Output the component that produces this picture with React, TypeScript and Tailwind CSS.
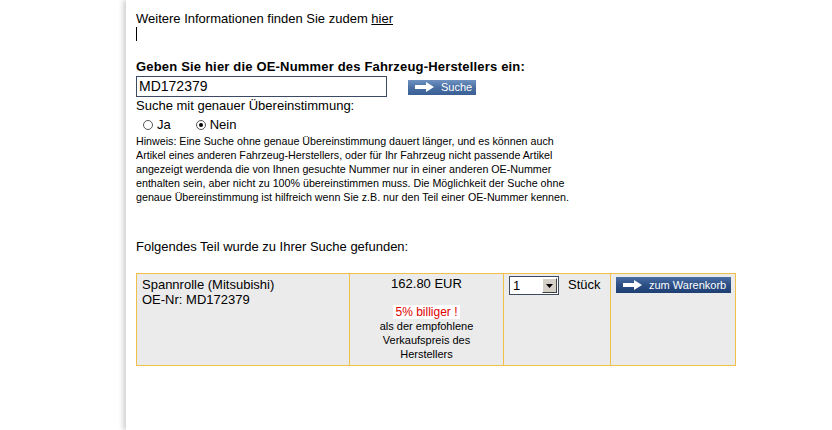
import React from "react";

function Arrow() {
  return (
    <svg width="20" height="10" viewBox="0 0 20 10" className="shrink-0">
      <path d="M0 3 H11 V0 L19 5 L11 10 V7 H0 Z" fill="#ffffff" />
    </svg>
  );
}

export default function App() {
  return (
    <div
      className="w-[832px] h-[430px] bg-white overflow-hidden flex"
      style={{ fontFamily: '"Liberation Sans", Arial, sans-serif' }}
    >
      <div className="w-[126px] shrink-0 bg-white" />
      <div className="flex-1 bg-white shadow-[-3px_0_5px_rgba(0,0,0,0.18)] pl-[10px] pt-[11px] text-black">
        <div className="text-[13px] leading-[15px]">
          Weitere Informationen finden Sie zudem <span className="underline">hier</span>
        </div>
        <div className="w-px h-[14px] bg-black mt-[1px]" />
        <div className="mt-[18px] text-[13px] leading-[15px] font-bold tracking-[0.18px]">
          Geben Sie hier die OE-Nummer des Fahrzeug-Herstellers ein:
        </div>
        <div className="flex items-center mt-[2px]">
          <div className="w-[251px] h-[21px] border border-[#3c4b63] px-[2px] flex items-center text-[14px]">
            MD172379
          </div>
          <div className="ml-[21px] mt-[1px] w-[68px] h-[15px] bg-gradient-to-b from-[#6f92c0] via-[#4a70a4] to-[#3a5f94] flex items-center pl-[7px] gap-[6px] text-white text-[11px]">
            <Arrow />
            <span>Suche</span>
          </div>
        </div>
        <div className="mt-[1px] text-[13px] leading-[16px]">Suche mit genauer Übereinstimmung:</div>
        <div className="flex items-center text-[13px] leading-[16px] mt-[3px] pl-[7px]">
          <span className="w-[10px] h-[10px] rounded-full border border-[#555] bg-white inline-block" />
          <span className="ml-[4px]">Ja</span>
          <span className="ml-[25px] w-[10px] h-[10px] rounded-full border border-[#555] bg-white inline-flex items-center justify-center">
            <span className="w-[4px] h-[4px] rounded-full bg-black" />
          </span>
          <span className="ml-[4px]">Nein</span>
        </div>
        <div className="mt-[1px] text-[10.7px] leading-[14px] whitespace-nowrap">
          Hinweis: Eine Suche ohne genaue Übereinstimmung dauert länger, und es können auch
          <br />
          Artikel eines anderen Fahrzeug-Herstellers, oder für Ihr Fahrzeug nicht passende Artikel
          <br />
          angezeigt werdenda die von Ihnen gesuchte Nummer nur in einer anderen OE-Nummer
          <br />
          enthalten sein, aber nicht zu 100% übereinstimmen muss. Die Möglichkeit der Suche ohne
          <br />
          genaue Übereinstimmung ist hilfreich wenn Sie z.B. nur den Teil einer OE-Nummer kennen.
        </div>
        <div className="mt-[35px] text-[13px] leading-[15px]">Folgendes Teil wurde zu Ihrer Suche gefunden:</div>
        <div className="mt-[19px] w-[600px] h-[93px] bg-[#f0c04a] p-px gap-px flex text-[13px]">
          <div className="w-[212px] bg-[#ebebeb] px-[5px] pt-[3px] leading-[15px]">
            <div>Spannrolle (Mitsubishi)</div>
            <div>OE-Nr: MD172379</div>
          </div>
          <div className="w-[153px] bg-[#ebebeb] pt-[2px] flex flex-col items-center text-center">
            <div className="leading-[15px]">162.80 EUR</div>
            <div className="mt-[14px] bg-white text-[#e00000] text-[12px] leading-[14px] px-[2px]">5% billiger !</div>
            <div className="text-[11px] leading-[14px]">
              als der empfohlene
              <br />
              Verkaufspreis des
              <br />
              Herstellers
            </div>
          </div>
          <div className="w-[106px] bg-[#ebebeb] pl-[5px] pt-[2px] flex items-start">
            <div className="w-[50px] h-[19px] border border-[#3c4b63] bg-white flex items-center">
              <span className="flex-1 pl-[3px] text-[13px]">1</span>
              <span className="w-[15px] h-[15px] mr-[1px] bg-[#d4d0c8] border border-t-white border-l-white border-r-[#404040] border-b-[#404040] flex items-center justify-center">
                <svg width="7" height="4" viewBox="0 0 7 4"><path d="M0 0 H7 L3.5 4 Z" fill="#000" /></svg>
              </span>
            </div>
            <span className="ml-[9px] mt-[1px] leading-[16px]">Stück</span>
          </div>
          <div className="flex-1 bg-[#ebebeb] pl-[5px] pt-[3px]">
            <div className="w-[115px] h-[16px] bg-gradient-to-b from-[#4a6fa3] via-[#2c4f86] to-[#1f3f72] flex items-center pl-[7px] gap-[6px] text-white text-[11px]">
              <Arrow />
              <span>zum Warenkorb</span>
            </div>
          </div>
        </div>
      </div>
    </div>
  );
}
